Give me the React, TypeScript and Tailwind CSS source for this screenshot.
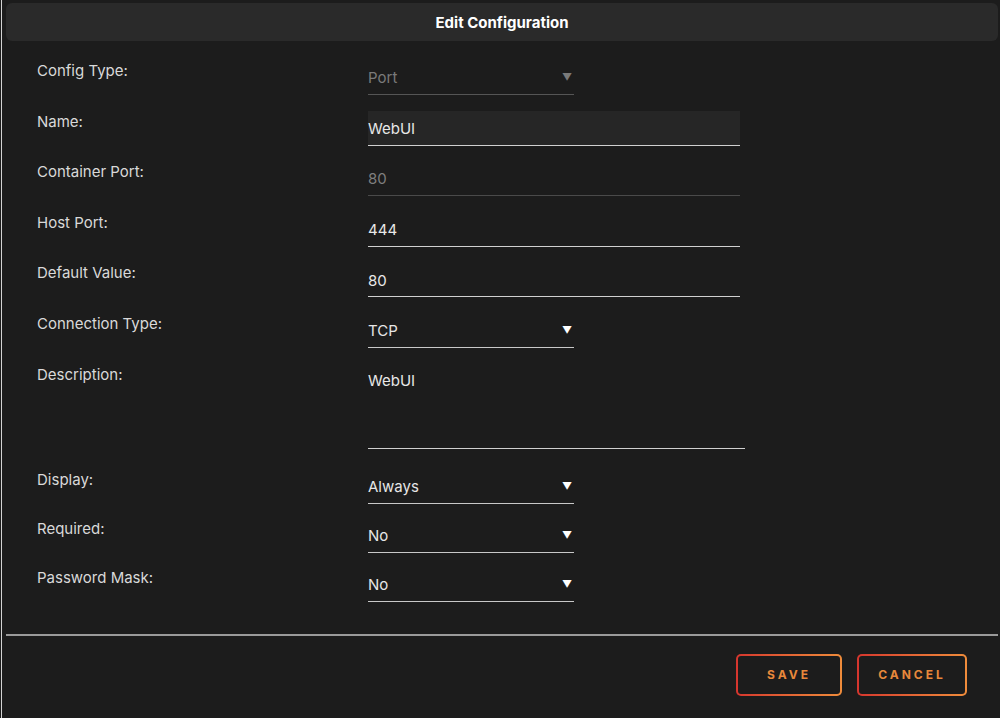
import React from "react";

const font = { fontFamily: "Inter, 'Liberation Sans', sans-serif" };

const Label = ({ children }: { children: React.ReactNode }) => (
  <div className="w-[331px] shrink-0 pt-[1px] text-[15px] leading-5 text-[#d9d9d9]">{children}</div>
);

const Select = ({ value, disabled }: { value: string; disabled?: boolean }) => (
  <div
    className={`w-[206px] h-[35px] flex items-center justify-between pr-[2px] border-b ${
      disabled ? "border-[#555555] text-[#7a7a7a]" : "border-[#c8c8c8] text-[#e6e6e6]"
    }`}
  >
    <span className="text-[15px] pt-[3px]">{value}</span>
    <span className={`text-[10px] pt-[1px] ${disabled ? "text-[#7a7a7a]" : "text-white"}`}>▼</span>
  </div>
);

const TextInput = ({
  value,
  disabled,
  filled,
}: {
  value: string;
  disabled?: boolean;
  filled?: boolean;
}) => (
  <div
    className={`w-[372px] h-[35px] flex items-center text-[15px] pt-[3px] border-b ${
      disabled ? "border-[#4a4a4a] text-[#7f7f7f]" : "border-[#d0d0d0] text-[#e8e8e8]"
    } ${filled ? "bg-[#262626]" : ""}`}
  >
    {value}
  </div>
);

const Row = ({ label, children }: { label: string; children: React.ReactNode }) => (
  <div className="flex items-start">
    <Label>{label}</Label>
    {children}
  </div>
);

const Button = ({ text, width }: { text: string; width: string }) => (
  <div className={`${width} h-[42px] rounded-[5px] p-[2px] bg-gradient-to-r from-[#d6352e] to-[#ef8c3b]`}>
    <div className="w-full h-full rounded-[3px] bg-[#1c1c1c] flex items-center justify-center text-[12px] font-bold tracking-[3px] text-[#e8883b]">
      {text}
    </div>
  </div>
);

export default function App() {
  return (
    <div className="w-[1000px] h-[718px] bg-[#1c1c1c] flex overflow-hidden" style={font}>
      <div className="w-[1px] ml-[1px] bg-[#d4d4d4]" />
      <div className="flex-1 pl-[4px] pr-[2px] pt-[3px] flex flex-col">
        <div className="h-[38px] rounded-[6px] bg-[#2a2a2a] flex items-center justify-center text-white font-bold text-[15px] pt-[2px]">
          Edit Configuration
        </div>

        <div className="pl-[31px] pt-[19px] flex flex-col gap-[15.6px]">
          <Row label="Config Type:">
            <Select value="Port" disabled />
          </Row>
          <Row label="Name:">
            <TextInput value="WebUI" filled />
          </Row>
          <Row label="Container Port:">
            <TextInput value="80" disabled />
          </Row>
          <Row label="Host Port:">
            <TextInput value="444" />
          </Row>
          <Row label="Default Value:">
            <TextInput value="80" />
          </Row>
          <Row label="Connection Type:">
            <Select value="TCP" />
          </Row>
          <Row label="Description:">
            <div className="w-[377px] h-[85px] border-b border-[#d0d0d0] text-[15px] text-[#e8e8e8] pt-[6px]">
              WebUI
            </div>
          </Row>
          <div className="flex flex-col gap-[14px] pt-[5px]">
            <Row label="Display:">
              <Select value="Always" />
            </Row>
            <Row label="Required:">
              <Select value="No" />
            </Row>
            <Row label="Password Mask:">
              <Select value="No" />
            </Row>
          </div>
        </div>

        <div className="mt-[32px] h-[2px] bg-[#9a9a9a]" />

        <div className="flex justify-end gap-[15px] pr-[31px] pt-[18px]">
          <Button text="SAVE" width="w-[106px]" />
          <Button text="CANCEL" width="w-[110px]" />
        </div>
      </div>
    </div>
  );
}
